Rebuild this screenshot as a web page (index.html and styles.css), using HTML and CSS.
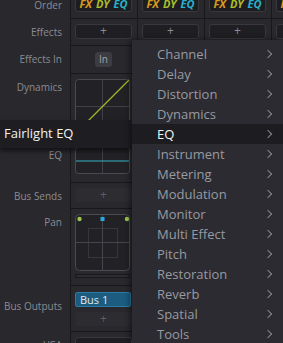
FILE: index.html
```html
<!DOCTYPE html>
<html lang="en">
<head>
	<meta charset="UTF-8">
	<title>mixer</title>
	<link rel="stylesheet" href="styles.css">
</head>
<body>
	<div class="mixer">
		<div class="row r-order">
			<div class="label">Order</div>
			<div class="cell"><div class="order"><i class="fx">FX</i><i class="dy">DY</i><i class="eq">EQ</i></div></div>
			<div class="cell"><div class="order"><i class="fx">FX</i><i class="dy">DY</i><i class="eq">EQ</i></div></div>
			<div class="cell"><div class="order"><i class="fx">FX</i><i class="dy">DY</i><i class="eq">EQ</i></div></div>
			<div class="cell"><div class="order"><i class="fx">FX</i><i class="dy">DY</i><i class="eq">EQ</i></div></div>
		</div>
		<div class="row r-effects">
			<div class="label">Effects</div>
			<div class="cell"><div class="btn">+</div></div>
			<div class="cell"><div class="btn">+</div></div>
			<div class="cell"><div class="btn">+</div></div>
			<div class="cell"><div class="btn">+</div></div>
		</div>
		<div class="row r-in">
			<div class="label">Effects In</div>
			<div class="cell"><div class="in">In</div></div>
			<div class="cell"><div class="in">In</div></div>
			<div class="cell"><div class="in">In</div></div>
			<div class="cell"><div class="in">In</div></div>
		</div>
		<div class="row r-dyn">
			<div class="label">Dynamics</div>
			<div class="cell">
				<svg class="graph" width="55" height="55" viewBox="0 0 55 55">
					<rect x="0.5" y="0.5" width="54" height="54" rx="3" fill="#222226" stroke="#4a4a50"/>
					<line x1="27.5" y1="1" x2="27.5" y2="54" stroke="#404046"/>
					<line x1="1" y1="27.5" x2="54" y2="27.5" stroke="#404046"/>
					<line x1="1" y1="54" x2="54" y2="1" stroke="#9cb82a" stroke-width="1.3"/>
				</svg>
			</div>
			<div class="cell"></div>
			<div class="cell"></div>
			<div class="cell"></div>
		</div>
		<div class="row r-eq">
			<div class="label">EQ</div>
			<div class="cell">
				<svg class="graph" width="55" height="27" viewBox="0 0 55 27">
					<rect x="0.5" y="0.5" width="54" height="26" rx="3" fill="#222226" stroke="#4a4a50"/>
					<line x1="27.5" y1="1" x2="27.5" y2="26" stroke="#404046"/>
					<line x1="1" y1="14" x2="54" y2="14" stroke="#36b3c4" stroke-width="1.2"/>
				</svg>
			</div>
			<div class="cell"></div>
			<div class="cell"></div>
			<div class="cell"></div>
		</div>
		<div class="row r-sends">
			<div class="label">Bus Sends</div>
			<div class="cell"><div class="btn soft">+</div></div>
			<div class="cell"></div>
			<div class="cell"></div>
			<div class="cell"></div>
		</div>
		<div class="row r-pan">
			<div class="label">Pan</div>
			<div class="cell">
				<svg class="graph" width="55" height="57" viewBox="0 0 55 57">
					<rect x="0.5" y="0.5" width="54" height="56" rx="4" fill="#222226" stroke="#4a4a50"/>
					<rect x="13.5" y="14.5" width="29" height="29" fill="none" stroke="#36363b"/>
					<line x1="27.5" y1="1" x2="27.5" y2="56" stroke="#45454b"/>
					<line x1="1" y1="28.5" x2="54" y2="28.5" stroke="#45454b"/>
					<circle cx="4.5" cy="5" r="2.2" fill="#9bc550"/>
					<circle cx="52" cy="5" r="2.2" fill="#9bc550"/>
					<rect x="25.5" y="3" width="4" height="4" fill="#2ba8e4"/>
				</svg>
				<div class="slider"></div>
			</div>
			<div class="cell"></div>
			<div class="cell"></div>
			<div class="cell"></div>
		</div>
		<div class="row r-out">
			<div class="label">Bus Outputs</div>
			<div class="cell">
				<div class="bus">Bus 1</div>
				<div class="btn soft add">+</div>
			</div>
			<div class="cell"></div>
			<div class="cell"></div>
			<div class="cell"></div>
		</div>
		<div class="row r-vca">
			<div class="label">VCA</div>
			<div class="cell"><div class="btn"></div></div>
			<div class="cell"></div>
			<div class="cell"></div>
			<div class="cell"></div>
		</div>
	</div>

	<div class="tip">Fairlight EQ</div>

	<ul class="menu">
		<li>Channel</li>
		<li>Delay</li>
		<li>Distortion</li>
		<li>Dynamics</li>
		<li class="on">EQ</li>
		<li>Instrument</li>
		<li>Metering</li>
		<li>Modulation</li>
		<li>Monitor</li>
		<li>Multi Effect</li>
		<li>Pitch</li>
		<li>Restoration</li>
		<li>Reverb</li>
		<li>Spatial</li>
		<li>Tools</li>
	</ul>
</body>
</html>
```

FILE: styles.css
```css
*{
	padding: 0;
	margin: 0;
	box-sizing: border-box;
}
html,body{
	width: 283px;
	height: 343px;
	overflow: hidden;
	background: #28282d;
	font-family: "Open Sans", "Noto Sans", sans-serif;
}
ul,li{
	list-style: none;
}
.mixer{
	margin-top: -8px;
	width: 283px;
	overflow: hidden;
}
.row{
	display: flex;
}
.label{
	width: 70px;
	flex: none;
	padding: 5px 8px 0 0;
	text-align: right;
	font-size: 10px;
	line-height: 16px;
	color: #8b8c92;
}
.cell{
	width: 67px;
	flex: none;
	border-left: 1px solid #18181b;
	border-bottom: 1px solid #18181b;
	padding: 5px 0 0 4px;
}
.r-order{ height: 27px; }
.r-order .cell{ padding-top: 4px; }
.r-effects{ height: 27px; }
.r-in{ height: 28px; }
.r-dyn{ height: 68px; }
.r-eq{ height: 41px; }
.r-sends{ height: 26px; }
.r-pan{ height: 77px; }
.r-out{ height: 46px; }
.r-out .label{ padding-top: 12px; }
.r-vca{ height: 40px; }

.order{
	width: 57px;
	height: 16px;
	background: #1d1d21;
	border: 1px solid #38383e;
	border-radius: 3px;
	text-align: center;
	font-size: 11px;
	line-height: 14px;
	font-weight: bold;
	white-space: nowrap;
}
.order i{
	margin: 0 2px;
}
.fx{ color: #d99a1c; }
.dy{ color: #a9bd2a; }
.eq{ color: #25b3cf; }

.btn{
	width: 57px;
	height: 15px;
	background: #1f1f23;
	border: 1px solid #38383e;
	border-radius: 3px;
	text-align: center;
	font-size: 12px;
	line-height: 12px;
	color: #8a8a90;
}
.btn.soft{
	height: 14px;
	background: #2c2c31;
	border-color: #2c2c31;
	color: #5e5e64;
}
.add{
	height: 15px;
	margin-top: 5px;
}
.in{
	width: 17px;
	height: 15px;
	margin: 1px 0 0 20px;
	background: #3c3c42;
	border-radius: 3px;
	text-align: center;
	font-size: 10px;
	line-height: 15px;
	color: #a3a3a8;
}
.graph{
	display: block;
}
.slider{
	width: 55px;
	height: 4px;
	margin-top: 3px;
	border: 1px solid #18181b;
	background: #2c2c31;
}
.bus{
	width: 56px;
	height: 15px;
	margin-top: 1px;
	background: #1b5c80;
	border: 1px solid #2a7aa3;
	border-radius: 2px;
	padding-left: 4px;
	font-size: 11px;
	line-height: 13px;
	color: #e6e6e6;
}

.tip{
	position: absolute;
	left: 0;
	top: 120px;
	width: 131px;
	height: 28px;
	padding-left: 4px;
	background: #1e1e22;
	box-shadow: 0 3px 4px rgba(0,0,0,0.5);
	font-size: 13px;
	line-height: 27px;
	color: #f2f2f2;
}

.menu{
	position: absolute;
	left: 132px;
	top: 40px;
	width: 151px;
	height: 303px;
	padding-top: 4px;
	background: #2b2b31;
	box-shadow: -2px 0 6px rgba(0,0,0,0.45);
	overflow: hidden;
}
.menu li{
	position: relative;
	height: 20px;
	padding-left: 25px;
	font-size: 13px;
	line-height: 20px;
	color: #989aa1;
}
.menu li::after{
	content: "";
	position: absolute;
	left: 133px;
	top: 7px;
	width: 5px;
	height: 5px;
	border-top: 1px solid #85868c;
	border-right: 1px solid #85868c;
	transform: rotate(45deg);
}
.menu li.on{
	background: #1d1d21;
	color: #f4f4f4;
}
```
